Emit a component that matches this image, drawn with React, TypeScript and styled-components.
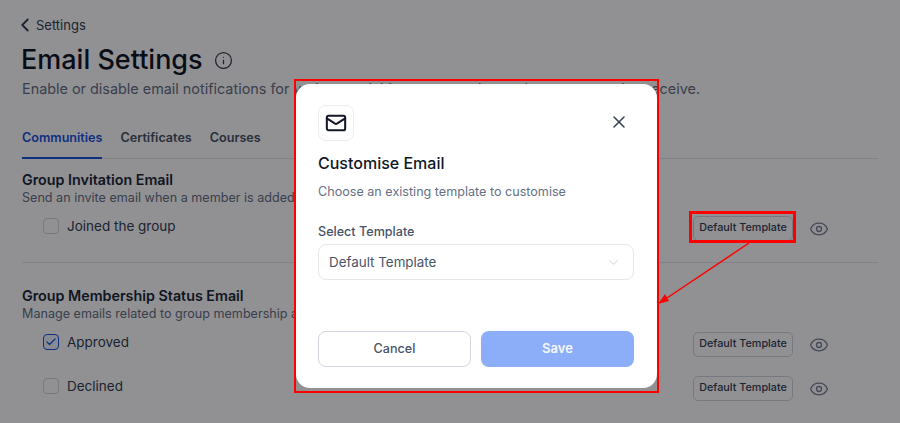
import styled, { createGlobalStyle } from 'styled-components'
import { Check, ChevronDown, ChevronLeft, Eye, Info, Mail, X } from 'lucide-react'

const GlobalStyle = createGlobalStyle`
  html, body {
    margin: 0;
    height: 100%;
    overflow: hidden;
    background: #fff;
    font-family: Inter, "Liberation Sans", sans-serif;
  }
  * { box-sizing: border-box; }
`

const rows = {
  invitation: [{ label: 'Joined the group', checked: false }],
  membership: [
    { label: 'Approved', checked: true },
    { label: 'Declined', checked: false },
  ],
}

const NotificationRow = ({ label, checked }: { label: string; checked: boolean }) => (
  <Row>
    <CheckBox $checked={checked}>{checked && <Check size={12} strokeWidth={2.5} />}</CheckBox>
    <RowLabel>{label}</RowLabel>
    <TemplateButton>Default Template</TemplateButton>
    <EyeIcon size={20} strokeWidth={1.6} />
  </Row>
)

export default function App() {
  return (
    <Page>
      <GlobalStyle />
      <BackLink>
        <ChevronLeft size={22} strokeWidth={2} />
        Settings
      </BackLink>
      <TitleRow>
        <Title>Email Settings</Title>
        <Info size={19} strokeWidth={1.6} color="#344054" />
      </TitleRow>
      <Subtitle>Enable or disable email notifications for various activities so you only get those you need to receive.</Subtitle>
      <Tabs>
        <Tab $active>Communities</Tab>
        <Tab>Certificates</Tab>
        <Tab>Courses</Tab>
      </Tabs>
      <Section>
        <SectionTitle>Group Invitation Email</SectionTitle>
        <SectionText>Send an invite email when a member is added to</SectionText>
        <RowList $offset={-3}>
          {rows.invitation.map((row) => (
            <NotificationRow key={row.label} {...row} />
          ))}
        </RowList>
      </Section>
      <Section $divided>
        <SectionTitle>Group Membership Status Email</SectionTitle>
        <SectionText>Manage emails related to group membership and</SectionText>
        <RowList $offset={-3}>
          {rows.membership.map((row) => (
            <NotificationRow key={row.label} {...row} />
          ))}
        </RowList>
      </Section>

      <Overlay />

      <Modal>
        <ModalHeader>
          <IconTile>
            <Mail size={22} strokeWidth={2.2} color="#101828" />
          </IconTile>
          <CloseButton>
            <X size={20} strokeWidth={1.8} />
          </CloseButton>
        </ModalHeader>
        <ModalTitle>Customise Email</ModalTitle>
        <ModalText>Choose an existing template to customise</ModalText>
        <FieldLabel>Select Template</FieldLabel>
        <Select>
          Default Template
          <ChevronDown size={15} strokeWidth={1.25} color="#c3c7d0" />
        </Select>
        <Actions>
          <CancelButton>Cancel</CancelButton>
          <SaveButton>Save</SaveButton>
        </Actions>
      </Modal>

      <ModalHighlight />
      <ButtonHighlight />
      <Arrow width="900" height="423" viewBox="0 0 900 423">
        <line x1="749" y1="243" x2="664" y2="300" stroke="#ff0000" strokeWidth="1.5" />
        <path d="M658 304 L665 294 L669 301 Z" fill="#ff0000" />
      </Arrow>
    </Page>
  )
}

const Page = styled.div`
  position: relative;
  width: 900px;
  height: 423px;
  overflow: hidden;
  padding: 15px 22px 0;
  color: #101828;
`

const BackLink = styled.div`
  display: flex;
  align-items: center;
  gap: 0;
  height: 20px;
  margin-left: -8px;
  font-size: 13px;
  color: #344054;
`

const TitleRow = styled.div`
  display: flex;
  align-items: center;
  gap: 11px;
  margin-top: 9px;
  margin-left: -1px;
  height: 32px;
`

const Title = styled.h1`
  margin: 0;
  font-size: 27px;
  line-height: 32px;
  font-weight: 500;
  color: #101828;
`

const Subtitle = styled.p`
  margin: 3px 0 0;
  font-size: 14.4px;
  line-height: 20px;
  white-space: nowrap;
  color: #667085;
`

const Tabs = styled.div`
  display: flex;
  gap: 18px;
  margin-top: 30px;
  height: 30px;
  border-bottom: 1px solid #e4e7ec;
`

const Tab = styled.div<{ $active?: boolean }>`
  height: 30px;
  font-size: 12.6px;
  line-height: 18px;
  font-weight: 600;
  color: ${(p) => (p.$active ? '#1c54e0' : '#475467')};
  border-bottom: 2px solid ${(p) => (p.$active ? '#1c54e0' : 'transparent')};
`

const Section = styled.section<{ $divided?: boolean }>`
  padding-top: ${(p) => (p.$divided ? '24px' : '12px')};
  margin-top: ${(p) => (p.$divided ? '14px' : '0')};
  border-top: ${(p) => (p.$divided ? '1px solid #e4e7ec' : 'none')};
`

const SectionTitle = styled.h3`
  margin: 0;
  font-size: 14.3px;
  line-height: 18px;
  font-weight: 600;
  color: #1d2939;
`

const SectionText = styled.p`
  margin: 0;
  font-size: 12.6px;
  line-height: 18px;
  white-space: nowrap;
  color: #667085;
`

const RowList = styled.div<{ $offset: number }>`
  margin-top: ${(p) => p.$offset}px;
`

const Row = styled.div`
  display: flex;
  align-items: center;
  height: 44px;
  padding-left: 21px;
`

const CheckBox = styled.span<{ $checked: boolean }>`
  display: flex;
  align-items: center;
  justify-content: center;
  width: 16px;
  height: 16px;
  border-radius: 4px;
  border: 1px solid ${(p) => (p.$checked ? '#1c54e0' : '#d0d5dd')};
  background: ${(p) => (p.$checked ? '#eff4ff' : 'transparent')};
  color: #1c54e0;
`

const RowLabel = styled.span`
  margin-left: 8px;
  font-size: 13.5px;
  color: #344054;
`

const TemplateButton = styled.button`
  margin: 5px 0 0 auto;
  width: 100px;
  height: 25px;
  padding: 0 0 2px;
  border: 1px solid #d0d5dd;
  border-radius: 5px;
  background: transparent;
  font-family: inherit;
  font-size: 10.8px;
  font-weight: 500;
  color: #344054;
`

const EyeIcon = styled(Eye)`
  margin: 5px 49px 0 16px;
  color: #7a8396;
`

const Overlay = styled.div`
  position: absolute;
  inset: 0;
  background: rgba(0, 0, 4, 0.43);
`

const Modal = styled.div`
  position: absolute;
  left: 296px;
  top: 84px;
  width: 361px;
  height: 304px;
  padding: 21px 23px 21px 22px;
  border-radius: 14px;
  background: #fff;
`

const ModalHeader = styled.div`
  display: flex;
  align-items: flex-start;
  justify-content: space-between;
`

const IconTile = styled.div`
  display: flex;
  align-items: center;
  justify-content: center;
  width: 36px;
  height: 36px;
  border: 1px solid #eaecf0;
  border-radius: 8px;
`

const CloseButton = styled.div`
  display: flex;
  padding-top: 7px;
  padding-right: 5px;
  color: #344054;
`

const ModalTitle = styled.h2`
  margin: 10px 0 0;
  font-size: 16px;
  line-height: 24px;
  font-weight: 500;
  color: #101828;
`

const ModalText = styled.p`
  margin: 7px 0 0;
  font-size: 12.6px;
  line-height: 20px;
  color: #667085;
`

const FieldLabel = styled.div`
  margin-top: 21px;
  font-size: 12.6px;
  line-height: 18px;
  font-weight: 500;
  color: #475467;
`

const Select = styled.div`
  display: flex;
  align-items: center;
  justify-content: space-between;
  height: 36px;
  margin-top: 3px;
  padding: 0 12px 0 10px;
  border: 1px solid #e4e7ec;
  border-radius: 8px;
  font-size: 13.4px;
  color: #475467;
`

const Actions = styled.div`
  display: grid;
  grid-template-columns: 153px 153px;
  gap: 10px;
  margin-top: 51px;
`

const CancelButton = styled.button`
  height: 36px;
  padding-bottom: 3px;
  border: 1px solid #d0d5dd;
  border-radius: 8px;
  background: #fff;
  font-family: inherit;
  font-size: 12.6px;
  font-weight: 500;
  color: #475467;
`

const SaveButton = styled.button`
  height: 36px;
  padding-bottom: 3px;
  border: none;
  border-radius: 8px;
  background: #8cadf7;
  font-family: inherit;
  font-size: 13px;
  font-weight: 600;
  color: #f5f8ff;
`

const ModalHighlight = styled.div`
  position: absolute;
  left: 294px;
  top: 79px;
  width: 365px;
  height: 314px;
  border: 2px solid #ff0000;
`

const ButtonHighlight = styled.div`
  position: absolute;
  left: 689px;
  top: 211px;
  width: 107px;
  height: 32px;
  border: 3px solid #ff0000;
`

const Arrow = styled.svg`
  position: absolute;
  left: 0;
  top: 0;
`
